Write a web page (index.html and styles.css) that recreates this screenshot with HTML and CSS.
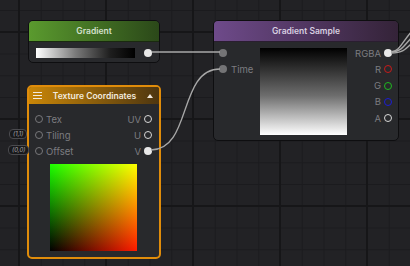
FILE: index.html
```html
<!DOCTYPE html>
<html lang="en">
<head>
    <meta charset="UTF-8">
    <title>Node Graph</title>
    <link rel="stylesheet" href="styles.css">
</head>
<body>
    <div class="canvas">
        <svg class="wires" width="410" height="266" viewBox="0 0 410 266">
            <path d="M152 52 L220 52" />
            <path d="M151 150 C192 150 178 69 220 69" />
            <path d="M391 52 C400 51 402 42 412 31" />
            <path d="M391 52 C401 52 404 46 412 37" />
            <path d="M391 53 C402 53 405 50 412 43" />
        </svg>

        <div class="node node-gradient">
            <div class="node-head">Gradient</div>
            <div class="node-body gradient-body">
                <div class="gradient-bar"></div>
                <span class="dot dot-fill"></span>
            </div>
        </div>

        <div class="node node-sample">
            <div class="node-head">Gradient Sample</div>
            <div class="node-body sample-body">
                <div class="ports ports-in">
                    <div class="port"><span class="dot dot-gray"></span></div>
                    <div class="port"><span class="dot dot-gray"></span><span class="label">Time</span></div>
                </div>
                <div class="preview preview-bw"></div>
                <div class="ports ports-out">
                    <div class="port"><span class="label">RGBA</span><span class="dot dot-fill"></span></div>
                    <div class="port"><span class="label">R</span><span class="dot ring ring-r"></span></div>
                    <div class="port"><span class="label">G</span><span class="dot ring ring-g"></span></div>
                    <div class="port"><span class="label">B</span><span class="dot ring ring-b"></span></div>
                    <div class="port"><span class="label">A</span><span class="dot ring ring-a"></span></div>
                </div>
            </div>
        </div>

        <div class="node node-texcoord">
            <div class="node-head tex-head">
                <span class="burger"><i></i><i></i><i></i></span>
                <span class="tex-title">Texture Coordinates</span>
                <span class="caret"></span>
            </div>
            <div class="node-body tex-body">
                <div class="tex-row">
                    <div class="port"><span class="dot ring ring-in"></span><span class="label">Tex</span></div>
                    <div class="port"><span class="label">UV</span><span class="dot ring ring-a"></span></div>
                </div>
                <div class="tex-row">
                    <div class="port"><span class="dot ring ring-in"></span><span class="label">Tiling</span></div>
                    <div class="port"><span class="label">U</span><span class="dot ring ring-a"></span></div>
                </div>
                <div class="tex-row">
                    <div class="port"><span class="dot ring ring-in"></span><span class="label">Offset</span></div>
                    <div class="port"><span class="label">V</span><span class="dot dot-fill"></span></div>
                </div>
                <div class="preview preview-uv"></div>
            </div>
            <span class="tag tag-tiling">(1,1)</span>
            <span class="tag tag-offset">(0,0)</span>
        </div>
    </div>
</body>
</html>
```

FILE: styles.css
```css
body {
    margin: 0;
    background: #222225;
    font-family: Inter, 'Noto Sans', sans-serif;
}
.canvas {
    position: relative;
    width: 410px;
    height: 266px;
    overflow: hidden;
    background-color: #222225;
    background-image:
        linear-gradient(to right, #161618 2px, transparent 2px),
        linear-gradient(to bottom, #161618 2px, transparent 2px),
        linear-gradient(to right, #1b1b1e 1px, transparent 1px),
        linear-gradient(to bottom, #1b1b1e 1px, transparent 1px);
    background-size: 87px 87px, 87px 87px, 21.75px 21.75px, 21.75px 21.75px;
    background-position: 18px 31px, 18px 31px, 19px 10px, 19px 10px;
}
.wires {
    position: absolute;
    left: 0;
    top: 0;
    z-index: 2;
    pointer-events: none;
}
.wires path {
    fill: none;
    stroke: #a8a8a8;
    stroke-width: 1.4;
}

/* nodes */
.node {
    position: absolute;
    box-sizing: border-box;
    background: #28292c;
    border: 1px solid #0e0e10;
    border-radius: 5px;
    z-index: 1;
}
.node-head {
    height: 20px;
    display: flex;
    align-items: center;
    justify-content: center;
    border-radius: 4px 4px 0 0;
    font-size: 8.5px;
    font-weight: 600;
}
.node-gradient {
    left: 28px;
    top: 20px;
    width: 132px;
    height: 43px;
}
.node-gradient .node-head {
    background: linear-gradient(to right, #5a9a2e, #2b4819);
    color: #d4e0cc;
    border-bottom: 1px solid #1a2a10;
}
.gradient-body {
    display: flex;
    align-items: center;
    padding: 6px 0 0 7px;
    gap: 9px;
}
.gradient-bar {
    width: 99px;
    height: 10px;
    background: linear-gradient(to right, #ffffff, #7a7a7a 40%, #1e1e1e 75%, #000);
}

.node-sample {
    left: 213px;
    top: 20px;
    width: 186px;
    height: 121px;
}
.node-sample .node-head {
    background: linear-gradient(to right, #6e4a8a, #342338);
    color: #d8cfe0;
    border-bottom: 1px solid #2a1e30;
}
.sample-body {
    display: flex;
}
.ports {
    display: flex;
    flex-direction: column;
    padding-top: 3px;
}
.port {
    height: 16.25px;
    display: flex;
    align-items: center;
    gap: 4px;
}
.ports-in {
    width: 46px;
    padding-left: 5px;
    box-sizing: border-box;
}
.ports-out {
    flex: 1;
    align-items: flex-end;
    padding-right: 6px;
}
.ports-out .port {
    gap: 3px;
}
.label {
    font-size: 9.5px;
    color: #7c7c80;
}
.preview {
    width: 87px;
    height: 87px;
}
.preview-bw {
    margin-top: 6px;
    background: linear-gradient(to bottom, #000, #6e6e6e 55%, #fff);
}

/* dots */
.dot {
    width: 8px;
    height: 8px;
    border-radius: 50%;
    box-sizing: border-box;
    flex-shrink: 0;
}
.dot-fill {
    background: #e8e8e8;
}
.dot-gray {
    background: #747476;
}
.ring {
    border: 1.5px solid #ccc;
}
.ring-r { border-color: #c81a1a; }
.ring-g { border-color: #1fb81f; }
.ring-b { border-color: #1c1cd4; }
.ring-a { border-color: #d8d8d8; }
.ring-in { border-color: #77777a; }

/* texture coordinates */
.node-texcoord {
    left: 27px;
    top: 85px;
    width: 134px;
    height: 174px;
    border: 2px solid #e08c0a;
}
.tex-head {
    height: 17px;
    justify-content: space-between;
    padding: 0 6px 0 4px;
    background: linear-gradient(to right, #c98608, #4e3610);
    color: #f2eadf;
    border-radius: 2px 2px 0 0;
}
.burger {
    display: flex;
    flex-direction: column;
    gap: 1.5px;
    width: 9px;
}
.burger i {
    display: block;
    height: 1.5px;
    background: #f2eadf;
}
.tex-title {
    flex: 1;
    text-align: center;
    font-size: 8.5px;
}
.caret {
    width: 0;
    height: 0;
    border-left: 3.5px solid transparent;
    border-right: 3.5px solid transparent;
    border-bottom: 4.5px solid #f2eadf;
}
.tex-body {
    display: flex;
    flex-direction: column;
    padding: 7px 7px 0 6px;
}
.tex-row {
    display: flex;
    justify-content: space-between;
    height: 16px;
}
.tex-row .port {
    height: 16px;
    gap: 3px;
}
.preview-uv {
    margin: 5px 0 0 15px;
    background-image:
        linear-gradient(to right, #000, #ff1a00),
        linear-gradient(to bottom, #1aff00, #000);
    background-blend-mode: screen;
}
.tag {
    position: absolute;
    left: -21px;
    padding: 0 3px;
    height: 8px;
    line-height: 8px;
    font-size: 6px;
    font-style: italic;
    color: #a8a8ac;
    background: #19191b;
    border: 1px solid #4a4a4e;
    border-radius: 4px;
}
.tag-tiling {
    top: 42px;
    left: -20px;
}
.tag-offset {
    top: 58px;
}
```
